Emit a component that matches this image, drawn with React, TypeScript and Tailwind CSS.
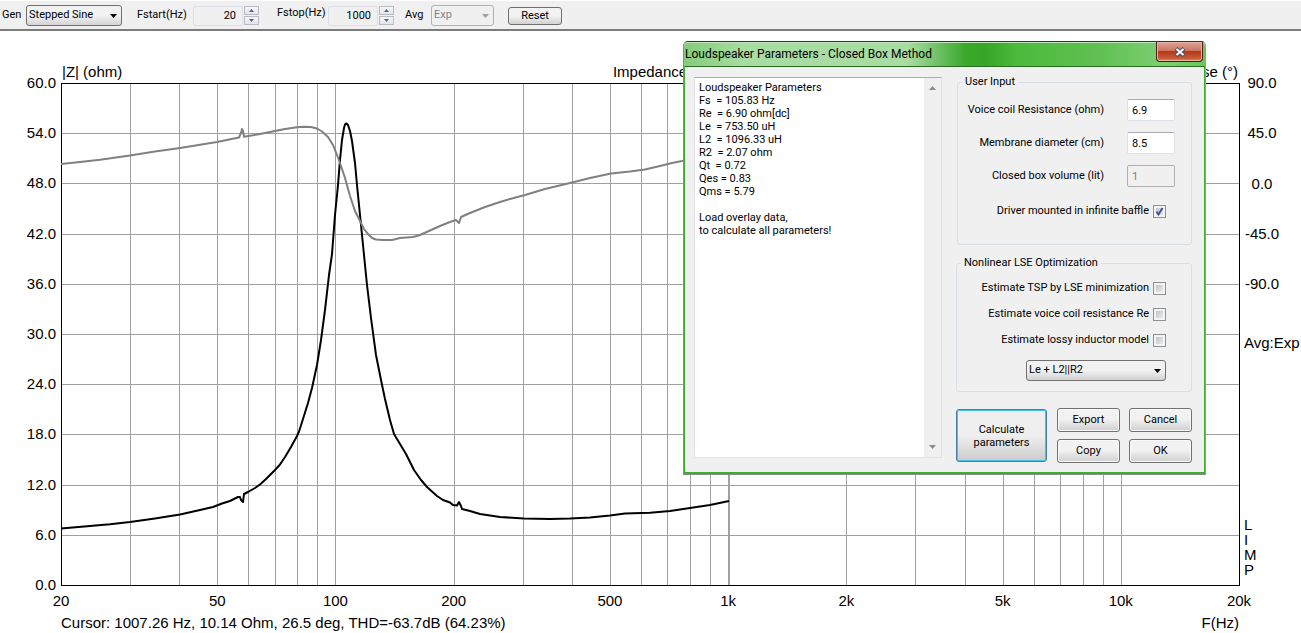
import type { ReactNode } from "react";

const uiFont = "font-['Roboto','Noto_Sans',sans-serif]";

const F_MIN = 20;
const DECADES = 3;

function freqPercent(freq: number): string {
  return `${(Math.log10(freq / F_MIN) / DECADES) * 100}%`;
}

const gridFrequencies: number[] = [
  30, 40, 50, 60, 70, 80, 90, 100, 200, 300, 400, 500, 600, 700, 800, 900, 1000,
  2000, 3000, 4000, 5000, 6000, 7000, 8000, 9000, 10000,
];

const frequencyLabels: { freq: number; text: string }[] = [
  { freq: 20, text: "20" },
  { freq: 50, text: "50" },
  { freq: 100, text: "100" },
  { freq: 200, text: "200" },
  { freq: 500, text: "500" },
  { freq: 1000, text: "1k" },
  { freq: 2000, text: "2k" },
  { freq: 5000, text: "5k" },
  { freq: 10000, text: "10k" },
  { freq: 20000, text: "20k" },
];

const impedanceLabels = ["60.0", "54.0", "48.0", "42.0", "36.0", "30.0", "24.0", "18.0", "12.0", "6.0", "0.0"];
const phaseLabels = ["90.0", "45.0", "0.0", "-45.0", "-90.0"];

const phaseCurve =
  "61,164 80,162 100,159.700 130,155.500 155,151.500 180,148 217,142 239,137.500 241,133 242,129 243,131 244,136.700 260,134 275,131 285,129 297,127.200 304,126.800 311,127 317,128.500 322,131.500 328,137 333,145 337,155 340,163 345,178 350,196 355,211 360,221 364,229 368,234 372,238 376,239.500 383,240 392,240 400,238 413,237 420,235 430,230.500 440,226 450,222 456,220 458,222 459,223 461,217 470,213 485,207 500,202 510,199 525,195 545,189 572,182.500 590,178 611,173.500 630,171.500 645,169.500 660,166 672,163 682,161 729,150";

const impedanceCurve =
  "61,528.500 90,526 110,524.300 130,522 155,518.500 180,514.500 200,510 213,507 222,503.500 230,501 238,497 240,497 241,500 243,502 244,494 248,492 255,488 260,484.500 266,479 270,475 275,470 280,464.500 285,457 291,447 297,436 299,431.500 303,419 308,403 312,388 317,365 321,340 325,310 329,275 332,254 335,215 338,185 340,160 342,140 344,128 345,124.500 346,123.500 347,124 348,125 350,131 352,141 355,163 357,185 359,205 362,235 364,255 367,285 371,318 376,355 381,380 385,399 390,420 394,434 400,444 406,454 414,470 421,480 427,487 437,496 443,500 450,502.500 453,505 457,505.500 459,502 461,506 462,509 470,511 480,514 490,515.500 500,517 524,518.500 550,519 570,518.500 590,517.500 610,515.500 625,513.500 650,512.800 670,511 690,508 710,505 729,501";

function Plot() {
  return (
    <svg className="block h-[502px] min-w-0 flex-1 overflow-visible" role="img" aria-label="Impedance and phase plot">
      <g transform="translate(.5 .5)" shapeRendering="crispEdges">
        {gridFrequencies.map((freq) => (
          <line key={freq} x1={freqPercent(freq)} x2={freqPercent(freq)} y1="0" y2="100%" stroke="#a0a0a0" />
        ))}
        {[10, 20, 30, 40, 50, 60, 70, 80, 90].map((p) => (
          <line key={p} x1="0" x2="100%" y1={`${p}%`} y2={`${p}%`} stroke="#a0a0a0" />
        ))}
        <g transform="translate(1 0)">
          <line x1={freqPercent(1000)} x2={freqPercent(1000)} y1="0" y2="100%" stroke="#b8b020" />
        </g>
        <rect width="100%" height="100%" fill="none" stroke="#000" />
      </g>
      <svg width="100%" height="100%" viewBox="61 83 1178 502" preserveAspectRatio="none" overflow="visible">
        <g fill="none" strokeWidth="2" strokeLinejoin="round">
          <polyline points={impedanceCurve} stroke="#000" vectorEffect="non-scaling-stroke" />
          <polyline points={phaseCurve} stroke="#808080" vectorEffect="non-scaling-stroke" />
        </g>
      </svg>
    </svg>
  );
}

function DownArrow({ className }: { className: string }) {
  return (
    <svg className={className} width="7" height="4" viewBox="0 0 7 4" aria-hidden="true">
      <path d="M0 0h7L3.500 4z" fill="currentColor" />
    </svg>
  );
}

function Spinner({ name }: { name: string }) {
  const half = "flex h-[9px] w-full items-center justify-center border border-[#b9bcc2] bg-gradient-to-b from-[#f7f7f7] to-[#e4e4e4] text-[#4a62b5]";
  return (
    <span className="flex w-[15px] flex-col gap-px">
      <button type="button" aria-label={`Increase ${name}`} className={half}>
        <svg width="5" height="3" viewBox="0 0 5 3"><path d="M0 3h5L2.500 0z" fill="currentColor" /></svg>
      </button>
      <button type="button" aria-label={`Decrease ${name}`} className={half}>
        <svg width="5" height="3" viewBox="0 0 5 3"><path d="M0 0h5L2.500 3z" fill="currentColor" /></svg>
      </button>
    </span>
  );
}

function Toolbar() {
  return (
    <header className={`flex h-[31px] items-center border-t border-b-2 border-t-white border-b-[#7c7c7c] bg-[#f0f0f0] pt-px pl-[2px] text-[11px] text-black ${uiFont}`}>
      <label htmlFor="gen" className="w-6">Gen</label>
      <span className="relative flex">
        <select id="gen" className="h-[21px] w-[96px] appearance-none rounded-[3px] border border-[#707070] bg-gradient-to-b from-[#f2f2f2] from-50% to-[#d4d4d4] pl-[2px] text-[11px]">
          <option>Stepped Sine</option>
        </select>
        <DownArrow className="pointer-events-none absolute top-[9px] right-[5px]" />
      </span>
      <label htmlFor="fstart" className="ml-[15px] w-[56px]">Fstart(Hz)</label>
      <input id="fstart" defaultValue="20" className="h-5 w-[50px] rounded-[2px] border border-[#dcdfe6] bg-[#f0f0f0] pr-[6px] text-right" />
      <span className="ml-px flex"><Spinner name="start frequency" /></span>
      <label htmlFor="fstop" className="ml-[18px] w-[51px] pb-1">Fstop(Hz)</label>
      <input id="fstop" defaultValue="1000" className="h-5 w-[50px] rounded-[2px] border border-[#dcdfe6] bg-[#f0f0f0] pr-[6px] text-right" />
      <span className="ml-px flex"><Spinner name="stop frequency" /></span>
      <label htmlFor="avg" className="ml-[11px] w-[26px]">Avg</label>
      <span className="relative flex text-[#838383]">
        <select id="avg" disabled className="h-[21px] w-[63px] appearance-none rounded-[3px] border border-[#adb2b5] bg-[#f0f0f0] pl-[2px] text-[11px] opacity-100">
          <option>Exp</option>
        </select>
        <DownArrow className="pointer-events-none absolute top-[9px] right-[5px] text-[#a0a0a0]" />
      </span>
      <button type="button" className="ml-[14px] h-[18px] w-[54px] rounded-[3px] border border-[#707070] bg-gradient-to-b from-[#f2f2f2] from-50% to-[#d2d2d2]">
        Reset
      </button>
    </header>
  );
}

function Chart() {
  return (
    <main className="font-['Liberation_Sans',Arial,sans-serif] text-[15px] leading-4 text-black">
      <div className="flex items-end justify-between pt-[33px] pr-[63px] pb-[3px] pl-[62px]">
        <span className="flex-1">|Z| (ohm)</span>
        <span>Impedance</span>
        <span className="flex-1 text-right">Phase (°)</span>
      </div>
      <div className="flex">
        <div className="-my-2 flex h-[518px] w-[61px] flex-col justify-between pr-[5px] text-right">
          {impedanceLabels.map((label) => <span key={label}>{label}</span>)}
        </div>
        <Plot />
        <div className="-my-2 flex h-[518px] w-[62px] flex-col pl-[5px]">
          <div className="flex h-[217px] w-9 flex-col justify-between text-center">
            {phaseLabels.map((label) => <span key={label}>{label}</span>)}
          </div>
          <span className="mt-[43px]">Avg:Exp</span>
          <div className="mt-auto mb-4 flex flex-col leading-[15px]">
            {["L", "I", "M", "P"].map((letter) => <span key={letter}>{letter}</span>)}
          </div>
        </div>
      </div>
      <div className="relative mt-2 mr-[62px] ml-[61px] h-4">
        {frequencyLabels.map(({ freq, text }) => (
          <span key={freq} className="absolute -translate-x-1/2" style={{ left: freqPercent(freq) }}>{text}</span>
        ))}
      </div>
      <div className="mt-[6px] flex justify-between pr-[62px] pl-[61px]">
        <span>Cursor: 1007.26 Hz, 10.14 Ohm, 26.5 deg, THD=-63.7dB (64.23%)</span>
        <span>F(Hz)</span>
      </div>
    </main>
  );
}

const report = `Loudspeaker Parameters
Fs  = 105.83 Hz
Re  = 6.90 ohm[dc]
Le  = 753.50 uH
L2  = 1096.33 uH
R2  = 2.07 ohm
Qt  = 0.72
Qes = 0.83
Qms = 5.79

Load overlay data,
to calculate all parameters!`;

function CheckRow({ id, checked = false, children }: { id: string; checked?: boolean; children: ReactNode }) {
  return (
    <div className="flex h-[26px] items-center justify-end gap-1">
      <label htmlFor={id}>{children}</label>
      <span className="relative flex">
        <input
          id={id}
          type="checkbox"
          defaultChecked={checked}
          className="peer size-[13px] appearance-none border border-[#8e8f8f] bg-gradient-to-br from-[#b4bac2] to-[#f6f6f6] shadow-[inset_0_0_0_2px_#f4f4f4]"
        />
        <svg className="pointer-events-none absolute top-0 left-0 hidden peer-checked:block" width="13" height="13" viewBox="0 0 13 13" aria-hidden="true">
          <path d="M3.500 6.500 L5.500 9.500 L9.500 3" fill="none" stroke="#3f5597" strokeWidth="2" />
        </svg>
      </span>
    </div>
  );
}

function FieldRow({ id, label, value, disabled = false }: { id: string; label: string; value: string; disabled?: boolean }) {
  return (
    <div className="flex items-center justify-end gap-[23px]">
      <label htmlFor={id}>{label}</label>
      <input
        id={id}
        defaultValue={value}
        disabled={disabled}
        className="h-[22px] w-12 rounded-[2px] border border-[#dde1e8] border-t-[#abadb3] bg-white pl-[4px] disabled:border-[#afafaf] disabled:bg-[#f0f0f0] disabled:text-[#838383]"
      />
    </div>
  );
}

function PushButton({ children }: { children: ReactNode }) {
  return (
    <button type="button" className="h-6 rounded-[3px] border border-[#707070] bg-gradient-to-b from-[#f2f2f2] from-45% to-[#cfcfcf] shadow-[inset_0_0_0_1px_#fafafa]">
      {children}
    </button>
  );
}

function ParametersDialog() {
  return (
    <section
      role="dialog"
      aria-labelledby="dialog-title"
      className={`absolute top-[41px] left-[683px] w-[523px] rounded-t-[5px] border-t border-r border-b border-l border-t-[#333] border-r-[#9a9a9a] border-b-[#8a8a8a] border-l-[#5fa956] bg-[#3cae2d] text-[11px] text-black ${uiFont}`}
    >
      <div className="flex h-6 items-start justify-between rounded-t-[4px] bg-[linear-gradient(90deg,#85cc7c_0%,#a9dca3_12%,#a9dca3_43%,#6dbf63_49%,#3aa92b_54%,#37a628_58%,#4db93e_64%,#60c152_80%,#7fce73_92%,#6cc55e_100%)] pl-px shadow-[inset_0_1px_0_#bfe8b8]">
        <h1 id="dialog-title" className="pt-[3px] text-[12px] leading-[18px]">Loudspeaker Parameters - Closed Box Method</h1>
        <button type="button" aria-label="Close" className="mr-[2px] flex h-5 w-[47px] items-center justify-center rounded-b-[4px] border border-t-0 border-[#4a1a14] bg-[linear-gradient(180deg,#dfa496_0%,#cd7460_46%,#b23a18_50%,#c85a32_85%,#de8a60_100%)] shadow-[inset_0_0_0_1px_#e8b6a8]">
          <svg width="12" height="10" viewBox="0 0 12 10" aria-hidden="true">
            <path d="M2 1.500 L10 8.500 M10 1.500 L2 8.500" stroke="#4b4f62" strokeWidth="4" />
            <path d="M2.500 2 L9.500 8 M9.500 2 L2.500 8" stroke="#fff" strokeWidth="2" />
          </svg>
        </button>
      </div>
      <div className="mx-px mb-[2px] flex h-[406px] gap-[14px] border-t border-t-[#2b6b22] bg-[#f0f0f0] pt-[10px] pr-3 pb-[14px] pl-[9px]">
        <div className="flex w-[248px] border border-[#e2e3ea] border-t-[#abadb3] bg-white">
          <textarea
            readOnly
            aria-label="Calculated parameters"
            defaultValue={report}
            className="min-w-0 flex-1 resize-none overflow-hidden pt-[3px] pl-[4px] leading-[13px] outline-none"
          />
          <div className="flex w-[17px] flex-col items-center justify-between bg-[#f0f0f0] py-2 text-[#8c8c8c]" aria-hidden="true">
            <svg width="7" height="4" viewBox="0 0 7 4"><path d="M0 4h7L3.500 0z" fill="currentColor" /></svg>
            <DownArrow className="" />
          </div>
        </div>
        <div className="-mt-[2px] -mb-[6px] flex min-w-0 flex-1 flex-col">
          <fieldset className="ml-px flex h-[170px] shrink-0 flex-col gap-[11px] rounded-[3px] border border-[#d5dfe5] pt-[10px] pr-4 pl-1">
            <legend className="px-[3px] leading-[14px]">User Input</legend>
            <FieldRow id="voice-coil" label="Voice coil Resistance (ohm)" value="6.9" />
            <FieldRow id="membrane" label="Membrane diameter (cm)" value="8.5" />
            <FieldRow id="box-volume" label="Closed box volume (lit)" value="1" disabled />
            <div className="pr-[9px]">
              <CheckRow id="baffle" checked>Driver mounted in infinite baffle</CheckRow>
            </div>
          </fieldset>
          <fieldset className="mt-[11px] flex h-[136px] shrink-0 flex-col rounded-[3px] border border-[#d5dfe5] pt-[5px] pr-[25px] pl-1">
            <legend className="px-[3px] leading-[14px]">Nonlinear LSE Optimization</legend>
            <CheckRow id="tsp">Estimate TSP by LSE minimization</CheckRow>
            <CheckRow id="resistance">Estimate voice coil resistance Re</CheckRow>
            <CheckRow id="inductor">Estimate lossy inductor model</CheckRow>
            <span className="relative mt-[7px] flex self-end">
              <select aria-label="Inductor model" className="h-[21px] w-[140px] appearance-none rounded-[3px] border border-[#707070] bg-gradient-to-b from-[#f2f2f2] from-50% to-[#d0d0d0] pl-[2px]">
                <option>Le + L2||R2</option>
              </select>
              <DownArrow className="pointer-events-none absolute top-[9px] right-[5px]" />
            </span>
          </fieldset>
          <div className="mt-4 flex items-center gap-[10px]">
            <button type="button" className="h-[53px] w-[91px] rounded-[3px] border border-[#3c7fb1] bg-gradient-to-b from-[#efefef] from-50% to-[#cbcbcb] px-3 leading-[13px] shadow-[inset_0_0_0_1px_#45c3ee]">
              Calculate parameters
            </button>
            <div className="grid flex-1 grid-cols-2 gap-x-[9px] gap-y-[7px]">
              <PushButton>Export</PushButton>
              <PushButton>Cancel</PushButton>
              <PushButton>Copy</PushButton>
              <PushButton>OK</PushButton>
            </div>
          </div>
        </div>
      </div>
    </section>
  );
}

export default function App() {
  return (
    <div className="relative min-h-screen overflow-hidden bg-white">
      <Toolbar />
      <Chart />
      <ParametersDialog />
    </div>
  );
}
